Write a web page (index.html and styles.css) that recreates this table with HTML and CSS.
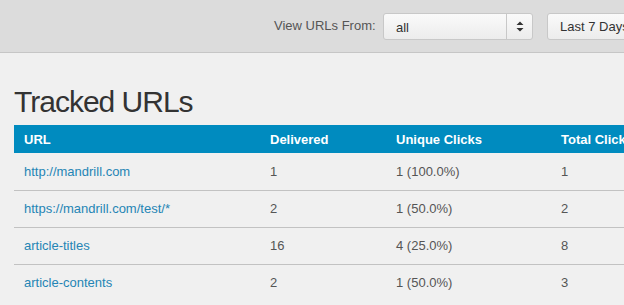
FILE: index.html
```html
<!DOCTYPE html>
<html>
<head>
<meta charset="utf-8">
<link rel="stylesheet" href="styles.css">
</head>
<body>
<div class="toolbar">
  <span class="label">View URLs From:</span>
  <div class="select">
    <span class="select-value">all</span>
    <span class="select-arrows">
      <svg width="8" height="11" viewBox="0 0 8 11"><path d="M4 0.5 L7.5 4 L0.5 4 Z M4 10.5 L7.5 7 L0.5 7 Z" fill="#333"/></svg>
    </span>
  </div>
  <div class="button">Last 7 Days</div>
</div>
<main class="content">
  <h1 class="title">Tracked URLs</h1>
  <div class="table-wrap">
  <table class="urls">
    <thead>
      <tr><th class="c-url">URL</th><th class="c-del">Delivered</th><th class="c-uniq">Unique Clicks</th><th class="c-total">Total Clicks</th></tr>
    </thead>
    <tbody>
      <tr><td><a href="#">http://mandrill.com</a></td><td>1</td><td>1 (100.0%)</td><td>1</td></tr>
      <tr><td><a href="#">https://mandrill.com/test/*</a></td><td>2</td><td>1 (50.0%)</td><td>2</td></tr>
      <tr><td><a href="#">article-titles</a></td><td>16</td><td>4 (25.0%)</td><td>8</td></tr>
      <tr><td><a href="#">article-contents</a></td><td>2</td><td>1 (50.0%)</td><td>3</td></tr>
    </tbody>
  </table>
  </div>
</main>
</body>
</html>
```
FILE: styles.css
```css
html, body {
  margin: 0;
  padding: 0;
  background: #f0f0f0;
  font-family: "Liberation Sans", Arial, sans-serif;
  overflow: hidden;
}
.toolbar {
  height: 52px;
  background: #dcdcdc;
  border-bottom: 1px solid #c6c6c6;
  display: flex;
  align-items: center;
  padding-left: 274px;
  white-space: nowrap;
  overflow: hidden;
}
.toolbar > * { flex-shrink: 0; }
.label {
  font-size: 13px;
  color: #555;
  width: 109px;
  margin-top: -1px;
}
.select {
  width: 148px;
  height: 25px;
  border: 1px solid #c8c8c8;
  border-radius: 3px;
  background: linear-gradient(#fafafa, #ececec);
  display: flex;
  margin-top: 1px;
}
.select-value {
  flex: 1;
  font-size: 13px;
  color: #333;
  padding-left: 12px;
  line-height: 27px;
  border-right: 1px solid #c8c8c8;
}
.select-arrows {
  width: 25px;
  display: flex;
  align-items: center;
  justify-content: center;
}
.button {
  margin-left: 14px;
  height: 25px;
  border: 1px solid #c8c8c8;
  border-radius: 3px;
  background: linear-gradient(#fafafa, #ececec);
  font-size: 13px;
  color: #333;
  padding: 0 14px 0 12px;
  line-height: 25px;
  margin-top: 1px;
}
.content {
  padding: 0 0 0 14px;
}
.title {
  margin: 26px 0 0 0;
  font-size: 30px;
  font-weight: normal;
  color: #333;
  letter-spacing: -1px;
  line-height: 46px;
}
.table-wrap {
  overflow: hidden;
}
.urls {
  border-collapse: collapse;
  width: 640px;
  table-layout: fixed;
  font-size: 13px;
  margin-top: 0;
}
.urls th {
  background: #008bbf;
  color: #fff;
  font-weight: bold;
  text-align: left;
  height: 28px;
  padding: 0 10px;
  box-sizing: border-box;
  white-space: nowrap;
}
.c-url { width: 246px; }
.c-del { width: 126px; }
.c-uniq { width: 165px; }
.urls td {
  height: 37px;
  padding: 0 10px;
  color: #555;
  border-bottom: 1px solid #c2c2c2;
  box-sizing: border-box;
  white-space: nowrap;
}
.urls tbody tr:last-child td { border-bottom: none; }
.urls a {
  color: #2585b5;
  text-decoration: none;
}
```
